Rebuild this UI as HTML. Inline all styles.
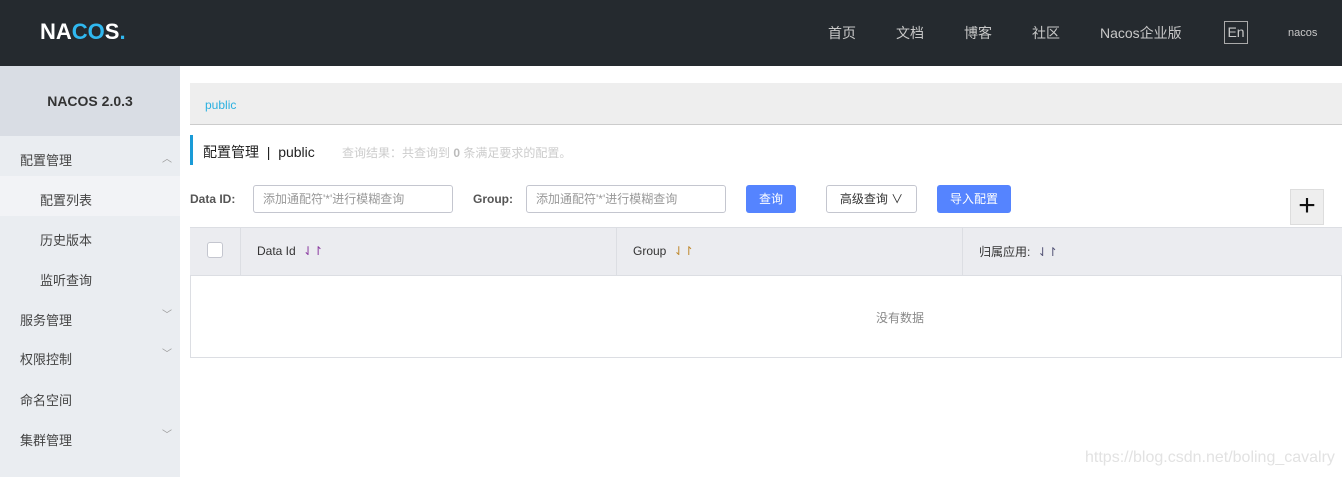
<!DOCTYPE html>
<html><head><meta charset="utf-8"><style>
*{margin:0;padding:0;box-sizing:border-box}
body{width:1342px;height:477px;overflow:hidden;background:#fff;font-family:"Liberation Sans","Noto Sans CJK SC",sans-serif;font-size:12px;color:#333;position:relative}
.a{position:absolute}
.hd{left:0;top:0;width:1342px;height:66px;background:#252a2f}
.nav{color:#c8c8c8;font-size:14px;top:23px}
.sb{left:0;top:66px;width:180px;height:411px;background:#eaedf1}
.sbt{left:0;top:66px;width:180px;height:70px;background:#d9dde4;font-weight:bold;font-size:14px;color:#333;text-align:center;line-height:70px}
.mi{left:20px;font-size:13px;color:#444}
.ch{left:162px;color:#999;font-size:10px}
.inp{height:28px;border:1px solid #c4c6cf;border-radius:3px;color:#999;padding-left:9px;line-height:26px;font-size:12px}
.btn{height:28px;border-radius:3px;background:#5584ff;color:#fff;text-align:center;line-height:28px;font-size:12px}
.lbl{font-weight:bold;color:#555;font-size:12px}
</style></head><body>
<div class="a hd"></div>
<div class="a" style="left:40px;top:19px;font-size:22px;font-weight:bold;color:#fff;letter-spacing:0px">NA<span style="color:#30b8f0">CO</span>S<span style="color:#30b8f0">.</span></div>
<div class="a nav" style="left:828px">首页</div>
<div class="a nav" style="left:896px">文档</div>
<div class="a nav" style="left:964px">博客</div>
<div class="a nav" style="left:1032px">社区</div>
<div class="a nav" style="left:1100px">Nacos企业版</div>
<div class="a" style="left:1224px;top:21px;width:24px;height:23px;border:1px solid #aaa;color:#c8c8c8;font-size:14px;text-align:center;line-height:21px">En</div>
<div class="a" style="left:1288px;top:27px;color:#c8c8c8;font-size:11px">nacos</div>

<div class="a sb"></div>
<div class="a sbt">NACOS 2.0.3</div>
<div class="a" style="left:0;top:176px;width:180px;height:40px;background:#f2f3f6"></div>
<div class="a mi" style="top:150px">配置管理</div><div class="a ch" style="top:150px">︿</div>
<div class="a mi" style="left:40px;top:190px">配置列表</div>
<div class="a mi" style="left:40px;top:230px">历史版本</div>
<div class="a mi" style="left:40px;top:270px">监听查询</div>
<div class="a mi" style="top:310px">服务管理</div><div class="a ch" style="top:306px">﹀</div>
<div class="a mi" style="top:349px">权限控制</div><div class="a ch" style="top:345px">﹀</div>
<div class="a mi" style="top:390px">命名空间</div>
<div class="a mi" style="top:430px">集群管理</div><div class="a ch" style="top:426px">﹀</div>

<div class="a" style="left:190px;top:83px;width:1152px;height:42px;background:#eeeeee;border-bottom:1px solid #ccc"></div>
<div class="a" style="left:205px;top:98px;color:#2ab0e0;font-size:12px">public</div>
<div class="a" style="left:190px;top:135px;width:3px;height:30px;background:#1a9bd7"></div>
<div class="a" style="left:203px;top:142px;font-size:14px;color:#222">配置管理 &nbsp;| &nbsp;public</div>
<div class="a" style="left:342px;top:144px;font-size:12px;color:#ccc">查询结果：共查询到 <b style="color:#bbb">0</b> 条满足要求的配置。</div>

<div class="a lbl" style="left:190px;top:192px">Data ID:</div>
<div class="a inp" style="left:253px;top:185px;width:200px">添加通配符'*'进行模糊查询</div>
<div class="a lbl" style="left:473px;top:192px">Group:</div>
<div class="a inp" style="left:526px;top:185px;width:200px">添加通配符'*'进行模糊查询</div>
<div class="a btn" style="left:746px;top:185px;width:50px">查询</div>
<div class="a" style="left:826px;top:185px;width:91px;height:28px;border:1px solid #c4c6cf;border-radius:3px;line-height:26px;text-align:center;color:#333">高级查询 ∨</div>
<div class="a btn" style="left:937px;top:185px;width:74px">导入配置</div>
<div class="a" style="left:1290px;top:189px;width:34px;height:36px;background:#eee;border:1px solid #ddd;text-align:center;line-height:32px;font-size:30px;color:#111">+</div>

<div class="a" style="left:190px;top:227px;width:1152px;height:131px;border:1px solid #dcdee3"></div>
<div class="a" style="left:190px;top:227px;width:1152px;height:49px;background:#ebecf0;border-top:1px solid #dcdee3;border-bottom:1px solid #dcdee3"></div>
<div class="a" style="left:240px;top:228px;width:1px;height:47px;background:#dcdee3"></div>
<div class="a" style="left:616px;top:228px;width:1px;height:47px;background:#dcdee3"></div>
<div class="a" style="left:962px;top:228px;width:1px;height:47px;background:#dcdee3"></div>
<div class="a" style="left:207px;top:242px;width:16px;height:16px;border:1px solid #c4c6cf;border-radius:3px;background:#fff"></div>
<div class="a" style="left:257px;top:244px;color:#333">Data Id <span style="color:#8a3aa0;margin-left:4px">⇃↾</span></div>
<div class="a" style="left:633px;top:244px;color:#333">Group <span style="color:#c08a30;margin-left:4px">⇃↾</span></div>
<div class="a" style="left:979px;top:243px;color:#333">归属应用: <span style="color:#557;margin-left:4px">⇃↾</span></div>
<div class="a" style="left:876px;top:309px;color:#888">没有数据</div>
<div class="a" style="left:1085px;top:449px;color:#e2e2e2;font-size:16px">https://blog.csdn.net/boling_cavalry</div>
</body></html>
